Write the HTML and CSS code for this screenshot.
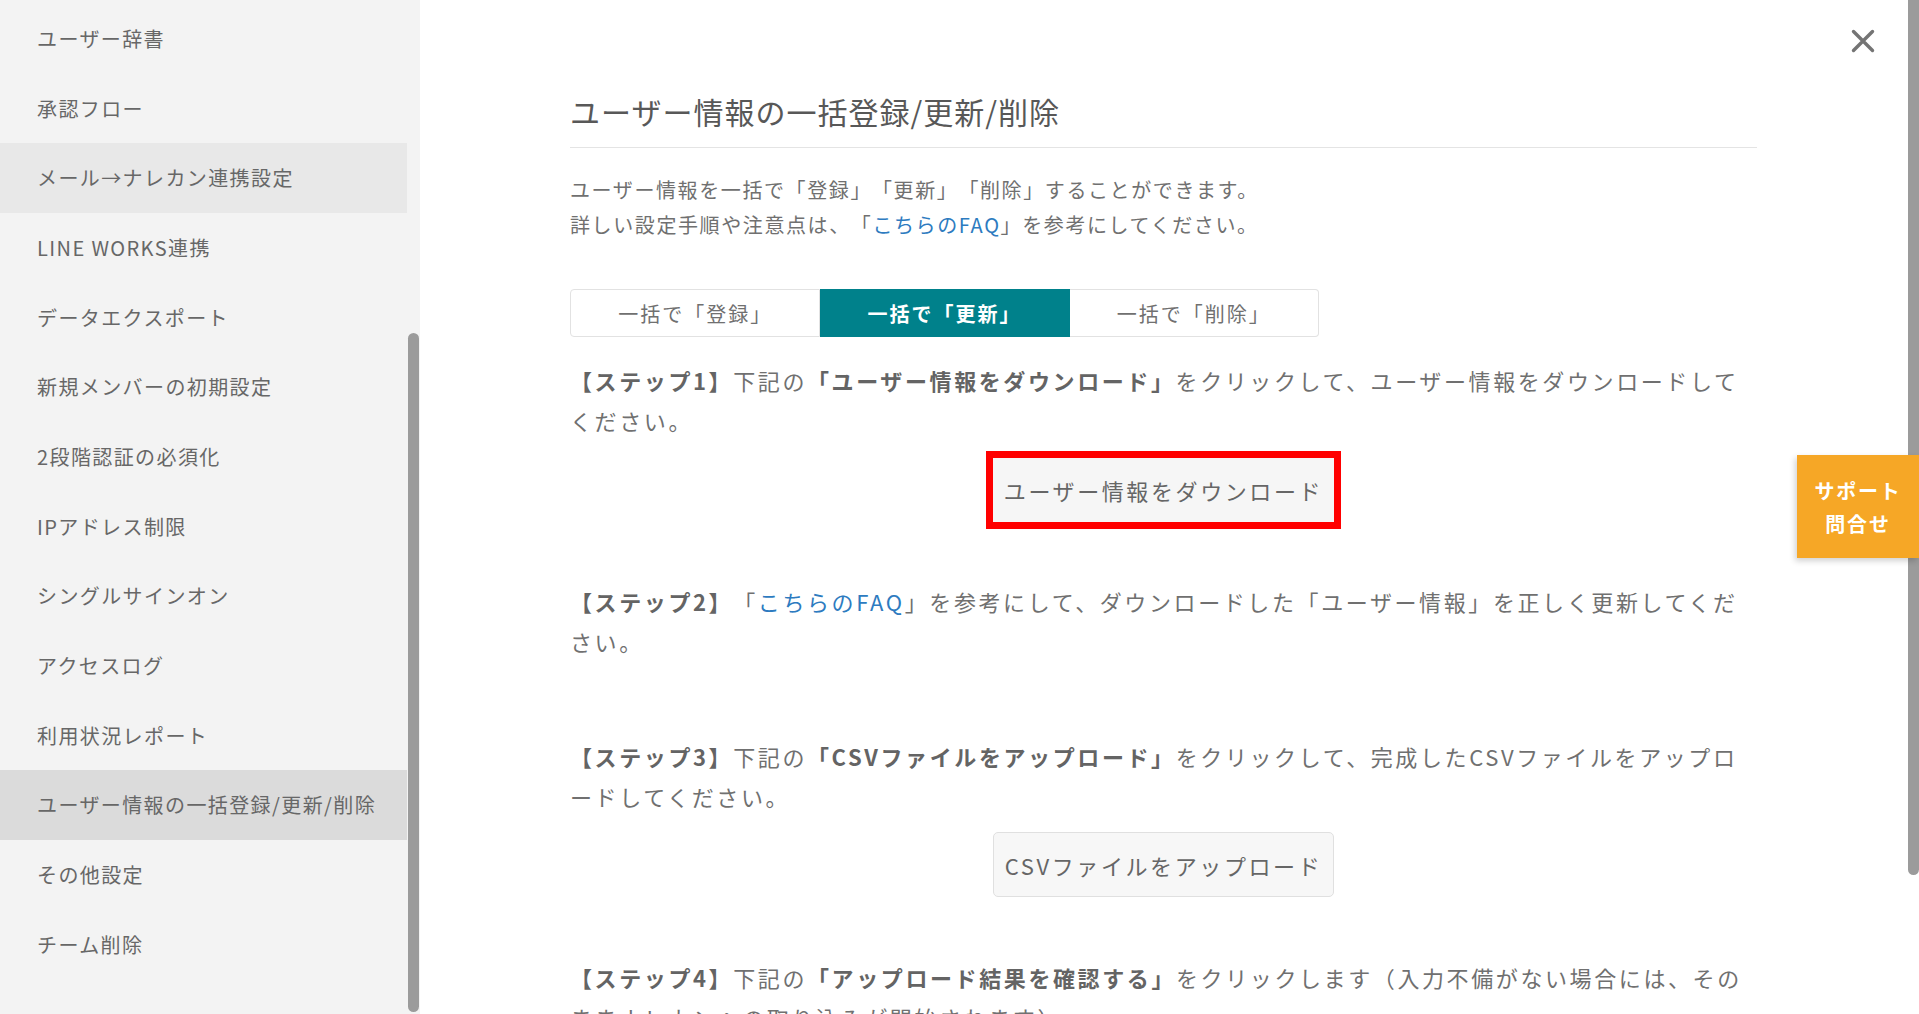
FILE: index.html
```html
<!DOCTYPE html>
<html lang="ja">
<head>
<meta charset="utf-8">
<title>ユーザー情報の一括登録/更新/削除</title>
<link rel="stylesheet" href="styles.css">
</head>
<body>
<div class="app">
  <aside class="sidebar">
    <ul class="menu">
      <li class="menu-item">ユーザー辞書</li>
      <li class="menu-item">承認フロー</li>
      <li class="menu-item is-hover">メール→ナレカン連携設定</li>
      <li class="menu-item">LINE WORKS連携</li>
      <li class="menu-item">データエクスポート</li>
      <li class="menu-item">新規メンバーの初期設定</li>
      <li class="menu-item">2段階認証の必須化</li>
      <li class="menu-item">IPアドレス制限</li>
      <li class="menu-item">シングルサインオン</li>
      <li class="menu-item">アクセスログ</li>
      <li class="menu-item">利用状況レポート</li>
      <li class="menu-item is-active">ユーザー情報の一括登録/更新/削除</li>
      <li class="menu-item">その他設定</li>
      <li class="menu-item">チーム削除</li>
    </ul>
    <div class="thumb side-thumb"></div>
  </aside>

  <main class="panel">
    <div class="content">
      <h1 class="title">ユーザー情報の一括登録/更新/削除</h1>
      <p class="intro">ユーザー情報を一括で「登録」「更新」「削除」することができます。<br>詳しい設定手順や注意点は、「<a class="link" href="#">こちらのFAQ</a>」を参考にしてください。</p>

      <div class="tabs">
        <div class="tab">一括で「登録」</div>
        <div class="tab is-current">一括で「更新」</div>
        <div class="tab">一括で「削除」</div>
      </div>

      <section class="step step-1">
        <p class="step-text"><b>【ステップ1】</b>下記の<b>「ユーザー情報をダウンロード」</b>をクリックして、ユーザー情報をダウンロードしてください。</p>
        <div class="btn-row btn-row-1">
          <div class="marker"><button class="btn btn-plain">ユーザー情報をダウンロード</button></div>
        </div>
      </section>

      <section class="step step-2">
        <p class="step-text"><b>【ステップ2】</b>「<a class="link" href="#">こちらのFAQ</a>」を参考にして、ダウンロードした「ユーザー情報」を正しく更新してください。</p>
      </section>

      <section class="step step-3">
        <p class="step-text"><b>【ステップ3】</b>下記の<b>「CSVファイルをアップロード」</b>をクリックして、完成したCSVファイルをアップロードしてください。</p>
        <div class="btn-row btn-row-3">
          <button class="btn btn-bordered">CSVファイルをアップロード</button>
        </div>
      </section>

      <section class="step step-4">
        <p class="step-text"><b>【ステップ4】</b>下記の<b>「アップロード結果を確認する」</b>をクリックします（入力不備がない場合には、そのままナレカンへの取り込みが開始されます）</p>
      </section>
    </div>

    <button class="close" aria-label="閉じる">
      <svg width="24" height="24" viewBox="0 0 24 24"><path d="M2.5 2.5 L21.5 21.5 M21.5 2.5 L2.5 21.5" stroke="#747474" stroke-width="3.4" stroke-linecap="round" fill="none"/></svg>
    </button>
    <div class="thumb main-thumb"></div>
    <a class="support" href="#">サポート<br>問合せ</a>
  </main>
</div>
</body>
</html>
```

FILE: styles.css
```css
* { box-sizing: border-box; }

html, body {
  margin: 0;
  padding: 0;
  height: 100%;
}

body {
  font-family: "Noto Sans CJK JP", "Noto Sans", sans-serif;
  color: #737373;
  background: #ffffff;
  overflow: hidden;
  text-spacing-trim: space-all;
}

.app {
  display: flex;
  height: 100vh;
}

/* ---------- sidebar ---------- */
.sidebar {
  position: relative;
  width: 420px;
  flex: 0 0 420px;
  background: #f3f3f3;
  overflow: hidden;
}

.menu {
  list-style: none;
  margin: 0;
  padding: 3.67px 0 0;
  width: 407px;
}

.menu-item {
  height: 69.67px;
  display: flex;
  align-items: center;
  padding-left: 37px;
  font-size: 20px;
  letter-spacing: 1.4px;
  color: #676767;
  white-space: nowrap;
}

.menu-item.is-hover { background: #e8e8e8; }
.menu-item.is-active { background: #dbdbdb; }

.thumb {
  position: absolute;
  background: #9b9b9b;
  border-radius: 6px;
  width: 11px;
}

.side-thumb {
  left: 408px;
  top: 333px;
  bottom: 2px;
}

/* ---------- main panel ---------- */
.panel {
  position: relative;
  flex: 1 1 auto;
  overflow: hidden;
  padding: 89px 162px 0 150px;
}

.main-thumb {
  right: 0;
  top: -8px;
  height: 883px;
}

.close {
  position: absolute;
  top: 29px;
  right: 44px;
  width: 24px;
  height: 24px;
  padding: 0;
  border: 0;
  background: none;
  display: flex;
}

.title {
  margin: 0;
  padding-bottom: 13px;
  border-bottom: 1px solid #e4e4e4;
  font-size: 30px;
  line-height: 45px;
  font-weight: 400;
  letter-spacing: 1px;
  color: #585858;
}

.intro {
  margin: 24px 0 0;
  font-size: 20px;
  line-height: 35px;
  letter-spacing: 1.6px;
  color: #707070;
}

.link {
  color: #2d7bc0;
  text-decoration: none;
}

/* tabs */
.tabs {
  display: flex;
  width: 749px;
  height: 48px;
  margin-top: 47px;
}

.tab {
  flex: 1 1 0;
  display: flex;
  align-items: center;
  justify-content: center;
  border: 1px solid #e2e2e2;
  font-size: 20px;
  letter-spacing: 2px;
  color: #707070;
}

.tab + .tab { border-left: 0; }
.tab:first-child { border-radius: 4px 0 0 4px; }
.tab:last-child { border-radius: 0 4px 4px 0; }

.tab.is-current {
  background: #00818b;
  border-color: #00818b;
  color: #ffffff;
  font-weight: 700;
}

/* steps */
.step-text {
  margin: 0;
  font-size: 22px;
  line-height: 39.5px;
  letter-spacing: 2.6px;
  color: #707070;
}

.step-text b {
  font-weight: 700;
  color: #646464;
}

.step-1 { margin-top: 24px; }
.step-2 { margin-top: 53px; }
.step-3 { margin-top: 76px; }
.step-4 { margin-top: 61px; }

.btn-row {
  display: flex;
  justify-content: center;
}

.btn-row-1 { margin-top: 11px; }
.btn-row-3 { margin-top: 16px; }

.marker {
  border: 7px solid #ff0000;
  display: flex;
}

.btn {
  font-family: inherit;
  width: 341px;
  height: 64px;
  padding: 0;
  font-size: 22px;
  letter-spacing: 2.6px;
  color: #666666;
  background: #f6f6f6;
}

.btn-plain {
  border: 0;
}

.btn-bordered {
  height: 65px;
  border: 1px solid #e0e0e0;
  border-radius: 5px;
  background: #f7f7f7;
}

/* support tab */
.support {
  position: absolute;
  right: 0;
  top: 455px;
  width: 122px;
  height: 103px;
  display: flex;
  align-items: center;
  justify-content: center;
  text-align: center;
  background: #f6a726;
  color: #ffffff;
  font-weight: 700;
  font-size: 20px;
  line-height: 33px;
  letter-spacing: 1.8px;
  text-decoration: none;
  box-shadow: -2px 3px 6px rgba(0, 0, 0, 0.18);
}
```
